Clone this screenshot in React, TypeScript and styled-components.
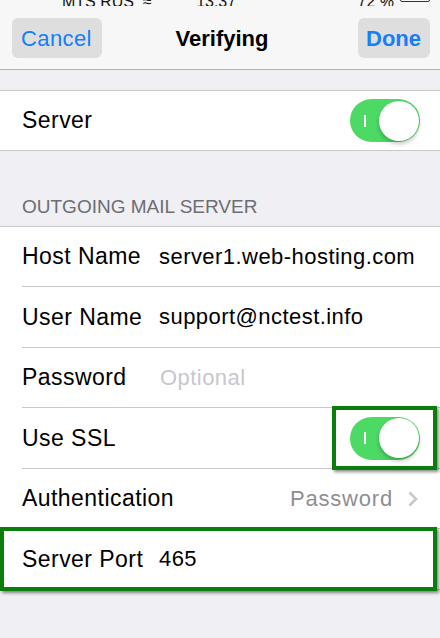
import React from "react";
import styled, { createGlobalStyle, css } from "styled-components";

const GlobalStyle = createGlobalStyle`
  html, body { margin: 0; padding: 0; background: #efeff4; }
  body { font-family: "Liberation Sans", Arial, Helvetica, sans-serif; -webkit-font-smoothing: antialiased; }
  * { box-sizing: border-box; }
`;

const Screen = styled.div`
  width: 440px;
  height: 638px;
  overflow: hidden;
  background: #efeff4;
  display: flex;
  flex-direction: column;
`;

const NavBar = styled.header`
  background: #f7f7f7;
  border-bottom: 1px solid #b2b2b2;
  display: flex;
  flex-direction: column;
`;

const StatusBar = styled.div`
  height: 6px;
  overflow: hidden;
  display: flex;
  align-items: flex-end;
  font-size: 16px;
  color: #111;
  padding: 0 10px 0 62px;
`;

const StatusText = styled.span<{ $grow?: boolean }>`
  line-height: 16px;
  margin-bottom: -4px;
  white-space: pre;
  ${(p) => p.$grow && css`flex: 1;`}
`;

const Battery = styled.span`
  width: 30px;
  height: 14px;
  margin-left: 6px;
  margin-bottom: 4px;
  border: 1px solid #333;
  border-radius: 2px;
`;

const NavRow = styled.div`
  position: relative;
  display: flex;
  justify-content: space-between;
  align-items: center;
  padding: 12px 10px 11px 12px;
`;

const NavButton = styled.button<{ $bold?: boolean }>`
  height: 40px;
  border: none;
  border-radius: 6px;
  background: #dedede;
  color: #147efb;
  font-family: inherit;
  font-size: 22px;
  font-weight: ${(p) => (p.$bold ? "bold" : "normal")};
  letter-spacing: ${(p) => (p.$bold ? "0" : "0.4px")};
  padding: 2px ${(p) => (p.$bold ? "9px 0 8px" : "10px 0 9px")};
  cursor: pointer;
`;

const Title = styled.h1`
  position: absolute;
  left: 0;
  right: 0;
  top: 50%;
  transform: translateY(-45%);
  margin: 0;
  text-align: center;
  font-size: 22px;
  font-weight: bold;
  color: #000;
  pointer-events: none;
  padding-left: 4px;
`;

const Group = styled.section<{ $top?: number }>`
  margin-top: ${(p) => p.$top ?? 0}px;
  background: #fff;
  border-top: 1px solid #c8c7cc;
  border-bottom: 1px solid #c8c7cc;
`;

const SectionHeader = styled.div`
  padding: 44px 22px 8px;
  font-size: 19px;
  line-height: 23px;
  color: #6d6d72;
  text-transform: uppercase;
`;

const Row = styled.div<{ $h?: number; $sep?: boolean }>`
  position: relative;
  height: ${(p) => p.$h ?? 59.5}px;
  display: flex;
  align-items: center;
  padding: 0 21px 0 22px;
  ${(p) =>
    p.$sep &&
    css`
      &::before {
        content: "";
        position: absolute;
        left: 22px;
        right: 0;
        bottom: -1px;
        height: 1px;
        background: #c8c7cc;
      }
      margin-bottom: 1px;
    `}
`;

const Label = styled.span<{ $fixed?: boolean }>`
  font-size: 23px;
  letter-spacing: 0.45px;
  color: #000;
  white-space: nowrap;
  ${(p) => p.$fixed && css`width: 137px; flex: none;`}
  ${(p) => !p.$fixed && css`flex: 1;`}
`;

const Value = styled.span<{ $placeholder?: boolean }>`
  font-size: 22px;
  letter-spacing: 0.45px;
  color: ${(p) => (p.$placeholder ? "#c7c7cd" : "#000")};
  white-space: nowrap;
  flex: 1;
  padding-left: ${(p) => (p.$placeholder ? "1px" : "0")};
`;

const DetailValue = styled.span`
  font-size: 22px;
  letter-spacing: 0.8px;
  color: #8e8e93;
  margin-right: 14px;
`;

const Highlight = styled.div`
  position: absolute;
  border: 4px solid #0b7d0b;
  box-shadow: 2px 2px 3px rgba(0, 0, 0, 0.45);
  pointer-events: none;
`;

const RowHighlight = styled(Highlight)`
  left: 0;
  right: 3px;
  top: -2px;
  bottom: -2px;
`;

const ToggleWrap = styled.div`
  position: relative;
  margin-right: -1px;
`;

const ToggleHighlight = styled(Highlight)`
  left: -18px;
  right: -17px;
  top: -11px;
  bottom: -10px;
`;

const Track = styled.div`
  position: relative;
  width: 70px;
  height: 43px;
  border-radius: 22px;
  background: #4cd964;
  display: flex;
  align-items: center;
  justify-content: flex-end;
  padding-right: 1px;
`;

const OnMark = styled.span`
  position: absolute;
  left: 14px;
  top: 50%;
  width: 2px;
  height: 12px;
  margin-top: -6px;
  background: #fff;
`;

const Knob = styled.span`
  width: 40px;
  height: 40px;
  border-radius: 50%;
  background: #fff;
  box-shadow: 0 3px 4px rgba(0, 0, 0, 0.22), 0 0 0 0.5px rgba(0, 0, 0, 0.06);
`;

const Toggle: React.FC<{ highlighted?: boolean }> = ({ highlighted }) => (
  <ToggleWrap>
    <Track>
      <OnMark />
      <Knob />
    </Track>
    {highlighted && <ToggleHighlight />}
  </ToggleWrap>
);

const Chevron = () => (
  <svg width="12" height="16" viewBox="0 0 12 16" fill="none">
    <path d="M2.5 1.5 L9 8 L2.5 14.5" stroke="#c7c7cc" strokeWidth="2.6" strokeLinecap="butt" strokeLinejoin="miter" />
  </svg>
);

export default function App() {
  return (
    <>
      <GlobalStyle />
      <Screen>
        <NavBar>
          <StatusBar>
            <StatusText>MTS RUS  ≈</StatusText>
            <StatusText $grow>          13:37</StatusText>
            <StatusText>72 %</StatusText>
            <Battery />
          </StatusBar>
          <NavRow>
            <NavButton>Cancel</NavButton>
            <Title>Verifying</Title>
            <NavButton $bold>Done</NavButton>
          </NavRow>
        </NavBar>

        <Group $top={20}>
          <Row $h={59}>
            <Label>Server</Label>
            <Toggle />
          </Row>
        </Group>

        <SectionHeader>Outgoing Mail Server</SectionHeader>

        <Group>
          <Row $sep $h={59}>
            <Label $fixed>Host Name</Label>
            <Value>server1.web-hosting.com</Value>
          </Row>
          <Row $sep $h={60}>
            <Label $fixed>User Name</Label>
            <Value>support@nctest.info</Value>
          </Row>
          <Row $sep $h={59}>
            <Label $fixed>Password</Label>
            <Value $placeholder>Optional</Value>
          </Row>
          <Row $sep $h={60}>
            <Label>Use SSL</Label>
            <Toggle highlighted />
          </Row>
          <Row $sep $h={59}>
            <Label>Authentication</Label>
            <DetailValue>Password</DetailValue>
            <Chevron />
          </Row>
          <Row $h={60}>
            <Label $fixed>Server Port</Label>
            <Value>465</Value>
            <RowHighlight />
          </Row>
        </Group>
      </Screen>
    </>
  );
}
